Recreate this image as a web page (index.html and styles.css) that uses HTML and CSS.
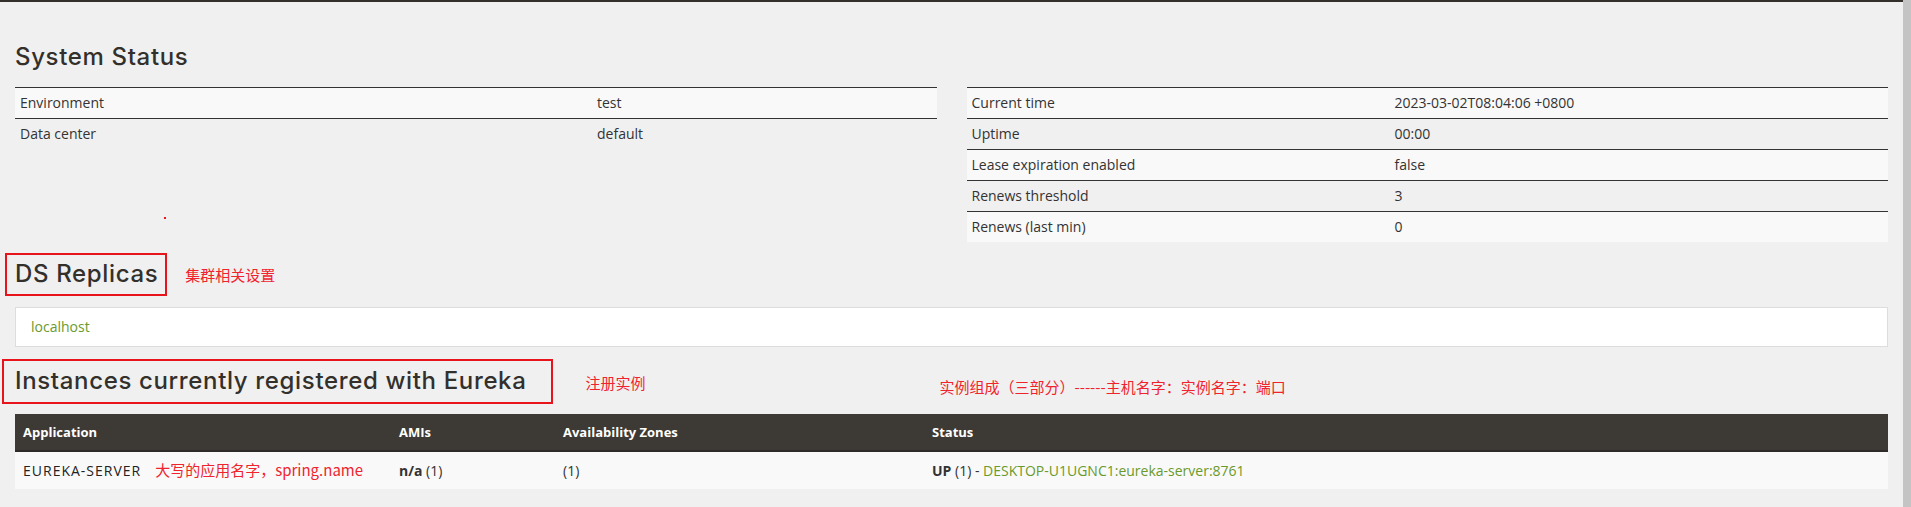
FILE: index.html
```html
<!DOCTYPE html>
<html lang="zh">
<head>
    <meta charset="UTF-8">
    <meta name="viewport" content="width=device-width, initial-scale=1.0">
    <title>Eureka</title>
    <link rel="stylesheet" href="styles.css">
</head>
<body>
    <div class="page">
        <div class="top-bar"></div>

        <div class="content">
            <h2 class="section-title">System Status</h2>

            <div class="status-row">
                <table class="status-table left-table">
                    <tr><td>Environment</td><td>test</td></tr>
                    <tr><td>Data center</td><td>default</td></tr>
                </table>
                <table class="status-table right-table">
                    <tr><td>Current time</td><td>2023-03-02T08:04:06 +0800</td></tr>
                    <tr><td>Uptime</td><td>00:00</td></tr>
                    <tr><td>Lease expiration enabled</td><td>false</td></tr>
                    <tr><td>Renews threshold</td><td>3</td></tr>
                    <tr><td>Renews (last min)</td><td>0</td></tr>
                </table>
            </div>
            <span class="stray-dot"></span>

            <!-- DS Replicas -->
            <div class="heading-row replicas-row">
                <div class="annot-box replicas-box">
                    <h2 class="section-title">DS Replicas</h2>
                </div>
                <span class="note">集群相关设置</span>
            </div>

            <div class="replica-panel">
                <a href="#" class="green-link">localhost</a>
            </div>

            <!-- Instances -->
            <div class="heading-row instances-row">
                <div class="annot-box instances-box">
                    <h2 class="section-title">Instances currently registered with Eureka</h2>
                </div>
                <span class="note register-note">注册实例</span>
                <span class="note parts-note">实例组成（三部分）------主机名字：实例名字：端口</span>
            </div>

            <table class="instances-table">
                <thead>
                    <tr>
                        <th class="col-app">Application</th>
                        <th class="col-ami">AMIs</th>
                        <th class="col-zone">Availability Zones</th>
                        <th>Status</th>
                    </tr>
                </thead>
                <tbody>
                    <tr>
                        <td><span class="app-name">EUREKA-SERVER</span><span class="note app-note">大写的应用名字，spring.name</span></td>
                        <td><b>n/a</b> (1)</td>
                        <td>(1)</td>
                        <td><b>UP</b> (1) - <a href="#" class="green-link">DESKTOP-U1UGNC1:eureka-server:8761</a></td>
                    </tr>
                </tbody>
            </table>
        </div>
    </div>
    <div class="scrollbar"></div>
</body>
</html>
```

FILE: styles.css
```css
body {
    margin: 0;
    padding: 0;
    display: flex;
    min-height: 507px;
    font-family: "Open Sans", "Noto Sans", sans-serif;
    font-size: 14px;
    color: #333;
    background-color: #f0f0f0;
}

.page {
    flex: 1;
    position: relative;
}

.top-bar {
    height: 2px;
    background-color: #33302c;
}

.scrollbar {
    width: 8px;
    background-color: #c4c4c4;
}

.content {
    padding: 0 15px;
}

.section-title {
    margin: 0;
    font-family: Inter, "Noto Sans", sans-serif;
    font-size: 24px;
    font-weight: 500;
    letter-spacing: 0.65px;
    line-height: 26px;
    color: #33302c;
    white-space: nowrap;
}

.content > .section-title {
    margin-top: 42px;
    margin-bottom: 17px;
}

.status-row {
    display: grid;
    grid-template-columns: 1fr 1fr;
    column-gap: 30px;
    align-items: start;
}

.status-table {
    width: 100%;
    border-collapse: collapse;
}

.status-table td {
    padding: 8px 5px;
    line-height: 14px;
    border-top: 1px solid #333;
    white-space: nowrap;
}

.status-table tr:nth-child(odd) td {
    background-color: #f9f9f9;
}

.left-table td:first-child {
    width: 567px;
}

.right-table td:first-child {
    width: 413px;
}

.stray-dot {
    position: absolute;
    left: 164px;
    top: 217px;
    width: 2px;
    height: 2px;
    background-color: #e8141c;
}

.heading-row {
    display: flex;
    align-items: center;
}

.annot-box {
    border: 2px solid #e8141c;
    margin-left: -10px;
}

.replicas-row {
    margin-top: 11px;
}

.replicas-box {
    padding: 6px 7px 7px 8px;
}

.note {
    font-family: "Noto Sans CJK SC", sans-serif;
    font-size: 15px;
    line-height: 22px;
    color: #f0232d;
    white-space: nowrap;
}

.replicas-row .note {
    margin-left: 18px;
}

.replica-panel {
    margin-top: 11px;
    padding: 10px 15px;
    line-height: 18px;
    background-color: #fff;
    border: 1px solid #ddd;
}

.green-link {
    color: #6b9a2c;
    text-decoration: none;
}

.instances-row {
    margin-top: 12px;
    align-items: flex-start;
}

.instances-box {
    margin-left: -13px;
    padding: 7px 25px 8px 11px;
}

.register-note {
    margin-left: 32px;
    margin-top: 13px;
}

.parts-note {
    margin-left: 294px;
    margin-top: 17px;
}

.instances-table {
    width: 100%;
    margin-top: 10px;
    border-collapse: collapse;
}

.instances-table th {
    padding: 11px 8px;
    line-height: 14px;
    font-size: 13px;
    text-align: left;
    color: #fff;
    font-weight: bold;
    background-color: #3d3934;
    border-bottom: 2px solid #2e2b28;
}

.instances-table td {
    padding: 11px 8px;
    line-height: 14px;
    background-color: #f9f9f9;
    white-space: nowrap;
}

.col-app {
    width: 360px;
}

.col-ami {
    width: 148px;
}

.col-zone {
    width: 353px;
}

.app-name {
    color: #222;
    letter-spacing: 1px;
}

.app-note {
    margin-left: 14px;
    line-height: 14px;
}
```
